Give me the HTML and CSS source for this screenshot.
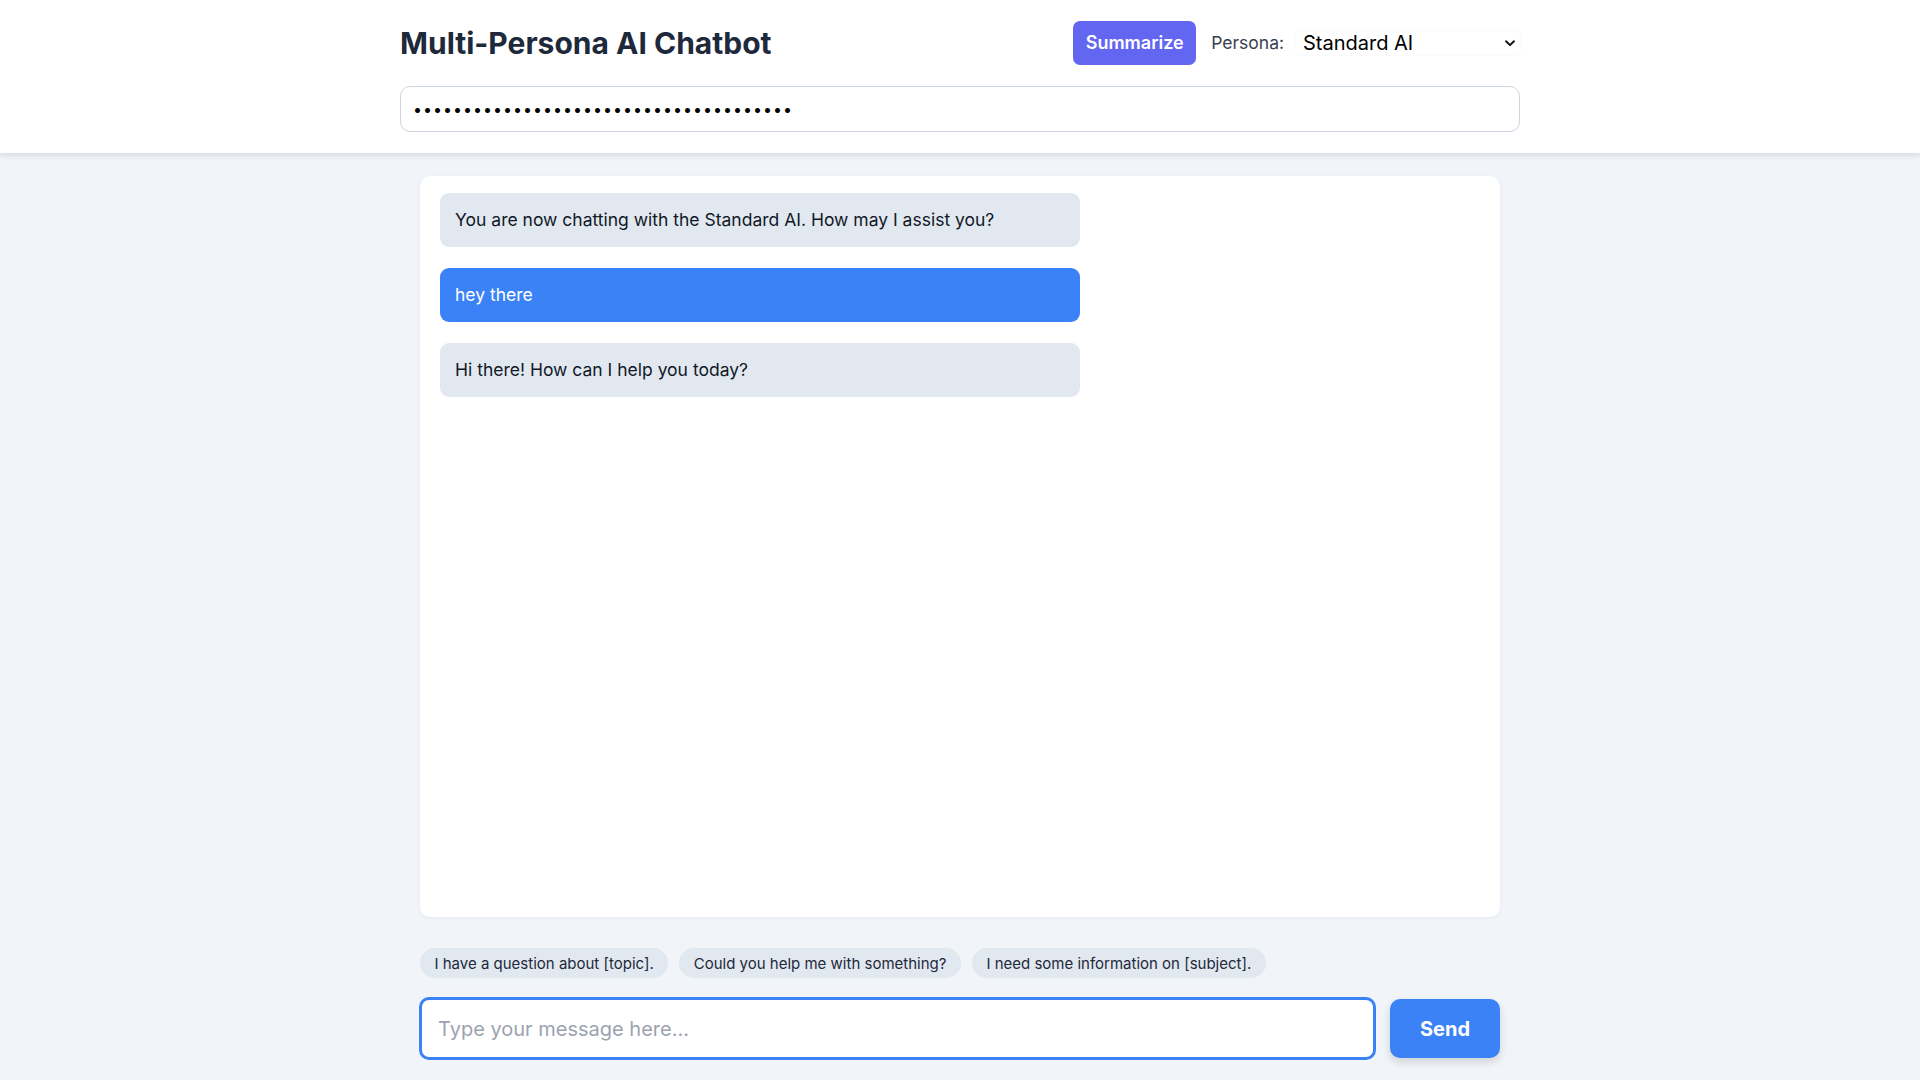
FILE: index.html
```html
<!DOCTYPE html>
<html lang="en">
<head>
<meta charset="utf-8">
<title>Multi-Persona AI Chatbot</title>
<link rel="stylesheet" href="styles.css">
</head>
<body>
<div class="page">
  <header class="header">
    <div class="header-inner">
      <div class="header-row">
        <h1 class="title">Multi-Persona AI Chatbot</h1>
        <div class="controls">
          <button class="summarize-btn">Summarize</button>
          <label class="persona-label">Persona:</label>
          <div class="select-wrap">
            <select class="persona-select">
              <option>Standard AI</option>
            </select>
            <svg class="chevron" width="14" height="14" viewBox="0 0 16 16" fill="none" stroke="#111" stroke-width="2.2" stroke-linecap="round" stroke-linejoin="round"><path d="M3.5 6l4.5 4.5L12.5 6"/></svg>
          </div>
        </div>
      </div>
      <input class="key-input" type="password" value="sk-abcdefghijklmnopqrstuvwxyz123456789">
    </div>
  </header>
  <main class="main">
    <section class="chat-panel">
      <div class="bubble bubble-ai">You are now chatting with the Standard AI. How may I assist you?</div>
      <div class="bubble bubble-user">hey there</div>
      <div class="bubble bubble-ai">Hi there! How can I help you today?</div>
    </section>
    <div class="chips">
      <button class="chip">I have a question about [topic].</button>
      <button class="chip">Could you help me with something?</button>
      <button class="chip">I need some information on [subject].</button>
    </div>
    <div class="composer">
      <input class="msg-input" type="text" placeholder="Type your message here...">
      <button class="send-btn">Send</button>
    </div>
  </main>
</div>
</body>
</html>
```
FILE: styles.css
```css
* { box-sizing: border-box; }
html, body { margin: 0; padding: 0; }
body {
  font-family: Inter, "Noto Sans", sans-serif;
  background: #f1f4f8;
  color: #1e293b;
}
.page {
  height: 1080px;
  display: flex;
  flex-direction: column;
}
.header {
  background: #ffffff;
  box-shadow: 0 2px 6px rgba(15, 23, 42, 0.12);
  padding: 21px 0 21px;
  position: relative;
  z-index: 1;
}
.header-inner {
  width: 1120px;
  margin: 0 auto;
}
.header-row {
  display: flex;
  align-items: center;
  justify-content: space-between;
  height: 43px;
}
.title {
  margin: 0;
  font-size: 30px;
  font-weight: 700;
  color: #1e293b;
}
.controls {
  display: flex;
  align-items: center;
}
.summarize-btn {
  font-family: inherit;
  background: #6366f1;
  color: #fff;
  border: none;
  border-radius: 7px;
  font-size: 18px;
  font-weight: 600;
  height: 44px;
  width: 123px;
  cursor: pointer;
}
.persona-label {
  font-size: 17.5px;
  color: #374151;
  margin-left: 15px;
  margin-right: 12px;
}
.select-wrap {
  position: relative;
  width: 224px;
}
.persona-select {
  appearance: none;
  -webkit-appearance: none;
  width: 100%;
  height: 24px;
  border: none;
  background: #fff;
  border-radius: 6px;
  box-shadow: 0 0 3px rgba(15, 23, 42, 0.05);
  font-family: inherit;
  font-size: 20px;
  color: #000;
  padding: 0 7px;
  line-height: 24px;
}
.chevron {
  position: absolute;
  right: 3px;
  top: 5px;
  pointer-events: none;
}
.key-input {
  display: block;
  width: 100%;
  height: 46px;
  margin-top: 22px;
  border: 1px solid #cbd5e1;
  border-radius: 10px;
  padding: 0 12px;
  font-family: inherit;
  font-size: 16px;
  letter-spacing: 1px;
  color: #000;
  background: #fff;
}
.main {
  flex: 1;
  width: 1080px;
  margin: 0 auto;
  padding: 23px 0 20px;
  display: flex;
  flex-direction: column;
  min-height: 0;
}
.chat-panel {
  flex: 1;
  background: #fff;
  border-radius: 10px;
  box-shadow: 0 1px 4px rgba(15, 23, 42, 0.05);
  padding: 17px 20px;
  display: flex;
  flex-direction: column;
  align-items: flex-start;
  gap: 21px;
}
.bubble {
  width: 640px;
  min-height: 54px;
  border-radius: 9px;
  padding: 14px 15px;
  font-size: 17.5px;
  line-height: 26px;
}
.bubble-ai {
  background: #e2e8f0;
  color: #111827;
}
.bubble-user {
  background: #3b82f6;
  color: #fff;
}
.chips {
  display: flex;
  gap: 11px;
  margin-top: 31px;
}
.chip {
  font-family: inherit;
  font-size: 15px;
  color: #1e293b;
  background: #e2e8f0;
  border: none;
  border-radius: 15px;
  height: 30px;
  padding: 0 14.5px;
  cursor: pointer;
}
.composer {
  display: flex;
  align-items: center;
  gap: 14px;
  margin-top: 19px;
}
.msg-input {
  flex: 1;
  height: 63px;
  border: 3px solid #3b82f6;
  border-radius: 10px;
  padding: 0 16px;
  font-family: inherit;
  font-size: 20px;
  background: #fff;
  outline: none;
  margin-left: -1px;
}
.msg-input::placeholder {
  color: #9ca3af;
}
.send-btn {
  font-family: inherit;
  width: 110px;
  height: 59px;
  background: #3b82f6;
  color: #fff;
  border: none;
  border-radius: 10px;
  font-size: 20px;
  font-weight: 700;
  box-shadow: 0 4px 8px rgba(15, 23, 42, 0.15);
  cursor: pointer;
}
```
